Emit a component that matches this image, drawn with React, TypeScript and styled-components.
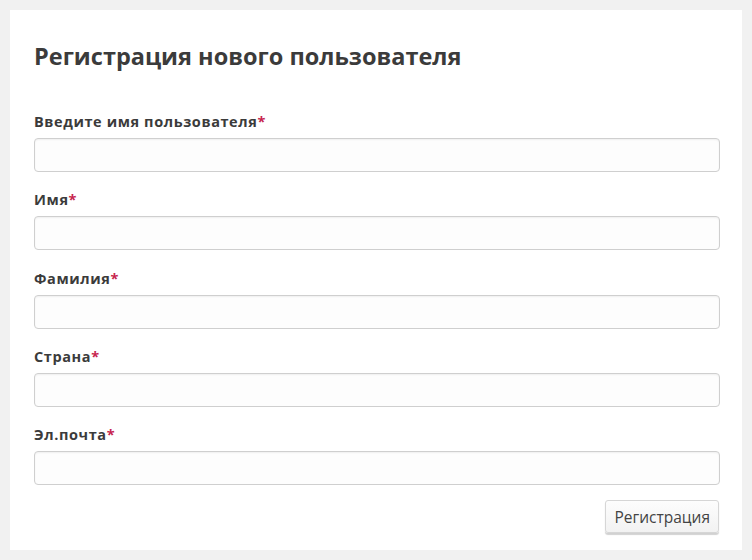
import React from 'react';
import styled, { createGlobalStyle } from 'styled-components';

const GlobalStyle = createGlobalStyle`
  html, body {
    margin: 0;
    padding: 0;
    background: #f1f1f1;
  }
  body {
    font-family: 'Open Sans', 'Liberation Sans', sans-serif;
  }
`;

const Page = styled.div`
  padding: 10px;
  width: 752px;
  height: 560px;
  box-sizing: border-box;
`;

const Card = styled.form`
  background: #fff;
  height: 540px;
  box-sizing: border-box;
  padding: 30px 22px 0 24px;
  display: flex;
  flex-direction: column;
`;

const Title = styled.h1`
  margin: 0 0 40px;
  font-size: 23.5px;
  font-weight: 700;
  color: #3b3b3b;
  line-height: 32px;
`;

const Field = styled.div`
  display: flex;
  flex-direction: column;
  margin-bottom: 18.25px;
`;

const Label = styled.label`
  font-size: 14.5px;
  font-weight: 700;
  letter-spacing: 0.6px;
  color: #3b3b3b;
  line-height: 20px;
  margin-bottom: 6px;
`;

const Required = styled.span`
  color: #c7254e;
`;

const Input = styled.input`
  height: 34px;
  box-sizing: border-box;
  border: 1px solid #cfcfcf;
  border-radius: 4px;
  background: #fdfdfd;
  box-shadow: inset 0 1px 2px rgba(0, 0, 0, 0.06);
  font: 14px 'Open Sans', sans-serif;
  padding: 0 10px;
`;

const Footer = styled.div`
  display: flex;
  justify-content: flex-end;
  margin-top: -3px;
  padding-right: 1px;
`;

const Button = styled.button`
  height: 33px;
  padding: 0 8px;
  font: 15.5px 'Open Sans', sans-serif;
  color: #444;
  background: linear-gradient(#fdfdfd, #f2f2f2);
  border: 1px solid #d6d6d6;
  border-radius: 3px;
  box-shadow: 0 2px 1px rgba(0, 0, 0, 0.18);
  cursor: pointer;
`;

const fields = ['Введите имя пользователя', 'Имя', 'Фамилия', 'Страна', 'Эл.почта'];

export default function App() {
  return (
    <Page>
      <GlobalStyle />
      <Card onSubmit={(e) => e.preventDefault()}>
        <Title>Регистрация нового пользователя</Title>
        {fields.map((name) => (
          <Field key={name}>
            <Label>
              {name}
              <Required>*</Required>
            </Label>
            <Input type="text" />
          </Field>
        ))}
        <Footer>
          <Button type="submit">Регистрация</Button>
        </Footer>
      </Card>
    </Page>
  );
}
